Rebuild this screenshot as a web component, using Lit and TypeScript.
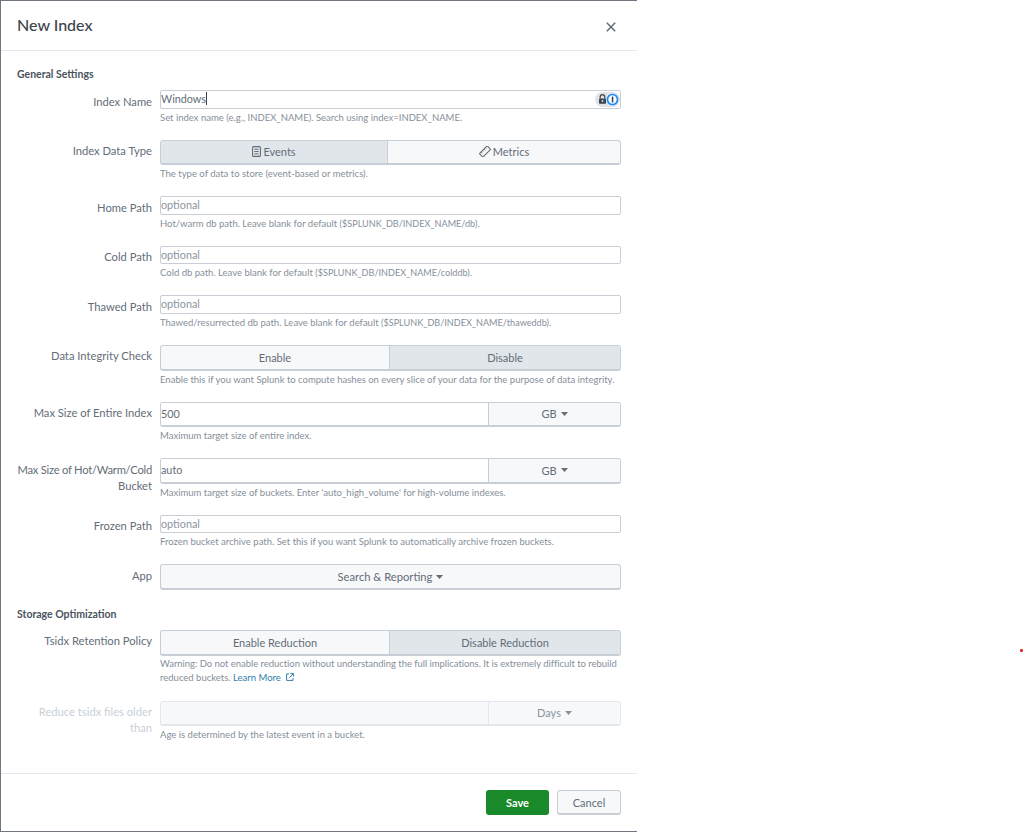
import { LitElement, html, css } from "lit";
import { customElement } from "lit/decorators.js";

const caret = html`<svg class="caret" width="7" height="4" viewBox="0 0 7 4"><path d="M0 0h7L3.5 4z" fill="currentColor"/></svg>`;
const eventsIcon = html`<svg class="ico" width="9" height="11" viewBox="0 0 9 11"><rect x=".6" y=".6" width="7.8" height="9.8" rx="1" fill="none" stroke="currentColor" stroke-width="1.1"/><path d="M2.4 3.2h4.2M2.4 5.5h4.2M2.4 7.8h4.2" stroke="currentColor" stroke-width="1"/></svg>`;
const metricsIcon = html`<svg class="ico" width="12" height="11" viewBox="0 0 12 11"><g transform="rotate(-45 6 5.5)"><rect x=".5" y="3" width="11" height="5" rx=".8" fill="none" stroke="currentColor" stroke-width="1.1"/><path d="M3 3v2M5 3v1.5M7 3v2M9 3v1.5" stroke="currentColor" stroke-width=".8"/></g></svg>`;
const extIcon = html`<svg class="ext" width="8" height="8" viewBox="0 0 8 8"><path d="M3 1H.6v6.4H7V5" fill="none" stroke="currentColor" stroke-width="1"/><path d="M4.4.6h3v3M7.2.8 3.4 4.6" fill="none" stroke="currentColor" stroke-width="1"/></svg>`;

@customElement("app-root")
export class AppRoot extends LitElement {
  static styles = css`
    :host { display: block; height: 832px; background: #fff; font-family: Lato, "Liberation Sans", sans-serif; color: #636d78; position: relative; }
    .modal { box-sizing: border-box; width: 637px; height: 832px; display: flex; flex-direction: column; border: 1px solid #6f7680; border-right: none; background: #fff; }
    header { height: 49px; flex: none; display: flex; align-items: center; justify-content: space-between; padding: 0 21px 0 16px; border-bottom: 1px solid #e4e8ee; box-sizing: content-box; }
    h1 { margin: 0; font-size: 16px; font-weight: 500; color: #3c444d; position: relative; top: -1px; }
    .close { display: block; position: relative; top: 1px; color: #5c6773; }
    .body { flex: 1; padding: 15px 16px 0 8px; min-height: 0; }
    h2 { margin: 0 0 8px 8px; font-size: 10.5px; line-height: 16px; font-weight: 700; color: #4a535d; }
    .row { display: grid; grid-template-columns: 143px 461px; column-gap: 8px; margin-bottom: 16px; }
    label, .label { display: block; text-align: right; font-size: 11.2px; line-height: 16px; padding-top: 3.5px; color: #636d78; }
    .label.off { color: #c8d0d9; }
    .tight { letter-spacing: -0.24px; }
    .input, input { box-sizing: border-box; display: block; width: 100%; height: 18.6px; border: 1px solid #c8ced6; border-radius: 2px; background: #fff; padding: 0; font: inherit; font-size: 10.8px; line-height: 15px; color: #636d78; outline: none; position: relative; }
    input { padding: 0 0 2px; }
    input::placeholder { color: #8a949e; opacity: 1; }
    .input { display: flex; align-items: flex-start; }
    .caretline { display: inline-block; width: 1px; height: 13px; margin-top: 1px; background: #3c444d; }
    .pw { position: absolute; right: 0; top: 1px; }
    .seg { display: flex; height: 25.6px; box-sizing: border-box; border: 1px solid #c8ced6; border-bottom-width: 2px; border-radius: 3px; overflow: hidden; background: #f7f8fa; }
    .seg > div { display: flex; align-items: center; justify-content: center; gap: 2px; font-size: 11px; color: #636d78; flex: 1 1 0; }
    .seg > div + div { border-left: 1px solid #c8ced6; }
    .seg > .sel { background: #e1e6eb; }
    .seg.wide > div:first-child { flex: 0 0 228px; }
    .seg.type > div:first-child { flex: 0 0 226px; }
    .combo { display: flex; height: 25.6px; box-sizing: border-box; border: 1px solid #c8ced6; border-bottom-width: 2px; border-radius: 3px; overflow: hidden; }
    .combo input { flex: 1; height: 100%; border: none; border-radius: 0; padding: 0 0 1px; min-width: 0; }
    .btn { display: flex; align-items: center; justify-content: center; gap: 4px; background: #f7f8fa; font-size: 11px; color: #636d78; }
    .combo .btn { flex: 0 0 131px; border-left: 1px solid #c8ced6; }
    .combo.off { border-color: #e4e8ee; background: #f7f8fa; }
    .combo.off input { background: #f7f8fa; }
    .combo.off .btn { border-left-color: #e4e8ee; color: #8a949e; }
    .full { height: 25.6px; box-sizing: border-box; border: 1px solid #c8ced6; border-bottom-width: 2px; border-radius: 3px; font-size: 11.2px; }
    .help { margin-top: 2px; font-size: 9.5px; line-height: 13px; color: #868f9a; white-space: nowrap; }
    .help.two { margin-top: 1px; line-height: 14px; }
    .help .caps { font-size: 9.1px; }
    .help .snug { letter-spacing: -0.045px; }
    .help a { color: #2f7fab; text-decoration: none; }
    .ext { margin-left: 3px; vertical-align: -0.5px; color: #2f7fab; }
    .ico { display: block; }
    .caret { display: block; }
    footer { flex: none; box-sizing: border-box; height: 58px; border-top: 1px solid #e4e8ee; display: flex; justify-content: flex-end; gap: 8px; padding: 16px 16px 0 0; }
    button { box-sizing: border-box; height: 25px; border-radius: 3px; font: inherit; font-size: 11px; cursor: pointer; padding: 0; }
    .save { width: 63px; background: #1a8929; border: none; color: #fff; font-weight: 700; }
    .cancel { width: 64px; background: #f7f8fa; border: 1px solid #c8ced6; border-bottom-width: 2px; color: #636d78; }
    .dot { position: absolute; left: 1020px; top: 649px; width: 3px; height: 3px; border-radius: 1px; background: #ee2a32; }
  `;

  private pathRow(label: string, start: string, path: string) {
    return html`<div class="row"><label>${label}</label><div><input placeholder="optional" /><div class="help">${start} <span class="caps">${path}</span>.</div></div></div>`;
  }

  private comboRow(label: unknown, value: string, unit: string, help: string) {
    return html`<div class="row"><label>${label}</label><div><div class="combo"><input .value=${value} /><div class="btn">${unit} ${caret}</div></div><div class="help">${help}</div></div></div>`;
  }

  render() {
    return html`
      <div class="modal">
        <header>
          <h1>New Index</h1>
          <svg class="close" width="10" height="10" viewBox="0 0 10 10"><path d="M.8.8l8.4 8.4M9.2.8.8 9.2" stroke="currentColor" stroke-width="1.4" fill="none"/></svg>
        </header>
        <div class="body">
          <h2>General Settings</h2>
          <div class="row">
            <label>Index Name</label>
            <div>
              <div class="input"><span>Windows</span><span class="caretline"></span>
                <svg class="pw" width="25" height="15" viewBox="0 0 25 15">
                  <rect x="0" y="0" width="25" height="15" rx="7.5" fill="#e1e3e6"/>
                  <path d="M5.2 6.5V5a2.3 2.3 0 0 1 4.6 0v1.5" fill="none" stroke="#3c444d" stroke-width="1.2"/>
                  <rect x="4" y="6.4" width="7" height="5.4" rx=".8" fill="#3c444d"/>
                  <circle cx="7.5" cy="9" r=".9" fill="#e1e3e6"/>
                  <circle cx="17.5" cy="7.5" r="5" fill="#fff" stroke="#1a8cff" stroke-width="1.7"/>
                  <rect x="16.8" y="4.6" width="1.5" height="5.8" rx=".5" fill="#2b3a55"/>
                </svg>
              </div>
              <div class="help">Set index name (e.g., INDEX_NAME). Search using index=INDEX_NAME.</div>
            </div>
          </div>
          <div class="row">
            <label>Index Data Type</label>
            <div>
              <div class="seg type"><div class="sel">${eventsIcon} Events</div><div>${metricsIcon} Metrics</div></div>
              <div class="help">The type of data to store (event-based or metrics).</div>
            </div>
          </div>
          ${this.pathRow("Home Path", "Hot/warm db path. Leave blank for default", "($SPLUNK_DB/INDEX_NAME/db)")}
          ${this.pathRow("Cold Path", "Cold db path. Leave blank for default", "($SPLUNK_DB/INDEX_NAME/colddb)")}
          ${this.pathRow("Thawed Path", "Thawed/resurrected db path. Leave blank for default", "($SPLUNK_DB/INDEX_NAME/thaweddb)")}
          <div class="row">
            <label>Data Integrity Check</label>
            <div>
              <div class="seg wide"><div>Enable</div><div class="sel">Disable</div></div>
              <div class="help">Enable this if you want Splunk to compute hashes on every slice of your data for the purpose of data integrity.</div>
            </div>
          </div>
          ${this.comboRow("Max Size of Entire Index", "500", "GB", "Maximum target size of entire index.")}
          ${this.comboRow(html`<span class="tight">Max Size of Hot/Warm/Cold</span><br />Bucket`, "auto", "GB", "Maximum target size of buckets. Enter 'auto_high_volume' for high-volume indexes.")}
          <div class="row"><label>Frozen Path</label><div><input placeholder="optional" /><div class="help">Frozen bucket archive path. Set this if you want Splunk to automatically archive frozen buckets.</div></div></div>
          <div class="row">
            <label>App</label>
            <div><div class="full btn">Search &amp; Reporting ${caret}</div></div>
          </div>
          <h2>Storage Optimization</h2>
          <div class="row">
            <label>Tsidx Retention Policy</label>
            <div>
              <div class="seg wide"><div>Enable Reduction</div><div class="sel">Disable Reduction</div></div>
              <div class="help two"><span class="snug">Warning: Do not enable reduction without understanding the full implications. It is extremely difficult to rebuild</span><br />reduced buckets. <a href="#">Learn More ${extIcon}</a></div>
            </div>
          </div>
          <div class="row">
            <div class="label off">Reduce tsidx files older<br />than</div>
            <div>
              <div class="combo off"><input disabled /><div class="btn">Days ${caret}</div></div>
              <div class="help">Age is determined by the latest event in a bucket.</div>
            </div>
          </div>
        </div>
        <footer>
          <button class="save">Save</button>
          <button class="cancel">Cancel</button>
        </footer>
      </div>
      <div class="dot"></div>
    `;
  }
}
